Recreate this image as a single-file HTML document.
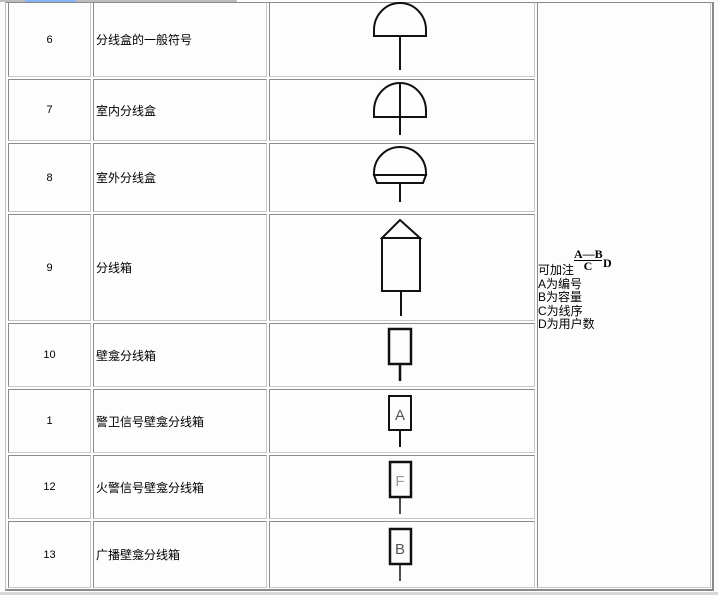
<!DOCTYPE html>
<html><head><meta charset="utf-8"><style>
body{margin:0;width:718px;height:595px;background:#fcfdfc;position:relative;overflow:hidden;font-family:"Liberation Sans","Noto Sans CJK SC",sans-serif;font-size:12px;color:#000}
.c{position:absolute;border-top:1px solid #8a8a8a;border-left:1px solid #8a8a8a;border-right:1px solid #c8c8c8;border-bottom:1px solid #c8c8c8;box-sizing:border-box}
.n{display:flex;align-items:center;justify-content:center;font-size:11px}
.t{display:flex;align-items:center;padding-left:2px}
</style></head><body>
<div style="position:absolute;left:0;top:0;width:237px;height:2px;background:#bdbdbd"></div>
<div style="position:absolute;left:25px;top:0;width:51px;height:2px;background:#8ab4f8"></div>
<div style="position:absolute;left:5px;top:2px;width:709px;height:589px;border-left:1px solid #c0c0c0;border-top:1px solid #8a8a8a;border-right:2px solid #8a8a8a;border-bottom:2px solid #8a8a8a;box-sizing:border-box"></div>
<div style="position:absolute;left:0;top:592px;width:718px;height:3px;background:#d8d8d8"></div>

<div class="c n" style="left:8px;top:2px;width:83px;height:75px">6</div>
<div class="c t" style="left:93px;top:2px;width:174px;height:75px">分线盒的一般符号</div>
<div class="c" style="left:269px;top:2px;width:266px;height:75px"></div>
<div class="c n" style="left:8px;top:79px;width:83px;height:62px">7</div>
<div class="c t" style="left:93px;top:79px;width:174px;height:62px">室内分线盒</div>
<div class="c" style="left:269px;top:79px;width:266px;height:62px"></div>
<div class="c n" style="left:8px;top:143px;width:83px;height:69px">8</div>
<div class="c t" style="left:93px;top:143px;width:174px;height:69px">室外分线盒</div>
<div class="c" style="left:269px;top:143px;width:266px;height:69px"></div>
<div class="c n" style="left:8px;top:214px;width:83px;height:107px">9</div>
<div class="c t" style="left:93px;top:214px;width:174px;height:107px">分线箱</div>
<div class="c" style="left:269px;top:214px;width:266px;height:107px"></div>
<div class="c n" style="left:8px;top:323px;width:83px;height:64px">10</div>
<div class="c t" style="left:93px;top:323px;width:174px;height:64px">壁龛分线箱</div>
<div class="c" style="left:269px;top:323px;width:266px;height:64px"></div>
<div class="c n" style="left:8px;top:389px;width:83px;height:64px">1</div>
<div class="c t" style="left:93px;top:389px;width:174px;height:64px">警卫信号壁龛分线箱</div>
<div class="c" style="left:269px;top:389px;width:266px;height:64px"></div>
<div class="c n" style="left:8px;top:455px;width:83px;height:64px">12</div>
<div class="c t" style="left:93px;top:455px;width:174px;height:64px">火警信号壁龛分线箱</div>
<div class="c" style="left:269px;top:455px;width:266px;height:64px"></div>
<div class="c n" style="left:8px;top:521px;width:83px;height:67px">13</div>
<div class="c t" style="left:93px;top:521px;width:174px;height:67px">广播壁龛分线箱</div>
<div class="c" style="left:269px;top:521px;width:266px;height:67px"></div>
<div class="c" style="left:537px;top:2px;width:174px;height:586px"></div>

<svg style="position:absolute;left:0;top:0" width="718" height="595" fill="none" stroke="#111" stroke-width="2">
<path d="M374 36 V30 A26 27 0 0 1 426 30 V36 Z"/><path d="M400 36 V70"/>
<path d="M374 117 V111 A26 28 0 0 1 426 111 V117 Z"/><path d="M400 83 V135"/>
<path d="M374 175 V173 A26 26 0 0 1 426 173 V175 Z"/><path d="M374 175 H426 L423 183 H377 Z"/><path d="M400 183 V202"/>
<path d="M382 238 L400 220 L420 238 Z"/><rect x="382" y="238" width="38" height="53"/><path d="M401 291 V316"/>
<rect x="389" y="329" width="22" height="35" stroke-width="2.5"/><path d="M400 364 V381" stroke-width="2.5"/>
<rect x="389" y="396" width="22" height="34" stroke-width="2"/><path d="M400 430 V447" stroke-width="2"/>
<rect x="390" y="462" width="21" height="35" stroke-width="2.5"/><path d="M400 497 V514" stroke-width="1.5"/>
<rect x="390" y="529" width="21" height="35" stroke-width="2.5"/><path d="M400 564 V581" stroke-width="1.5"/>
<g fill="#555" stroke="none" font-family="Liberation Sans,sans-serif" font-size="15" text-anchor="middle">
<text x="400" y="420">A</text><text x="400" y="486" fill="#999">F</text><text x="400" y="554">B</text></g>
</svg>

<div style="position:absolute;left:574px;top:249px;font-family:'Liberation Serif',serif;font-weight:bold;font-size:12px;line-height:11px;text-align:center;width:28px;white-space:nowrap"><div style="border-bottom:1px solid #000">A—B</div><div>C</div></div>
<div style="position:absolute;left:603px;top:256px;font-family:'Liberation Serif',serif;font-weight:bold;font-size:12px">D</div>
<div style="position:absolute;left:538px;top:264px;line-height:13.5px;font-size:12px;white-space:nowrap">可加注<br>A为编号<br>B为容量<br>C为线序<br>D为用户数</div>
</body></html>
